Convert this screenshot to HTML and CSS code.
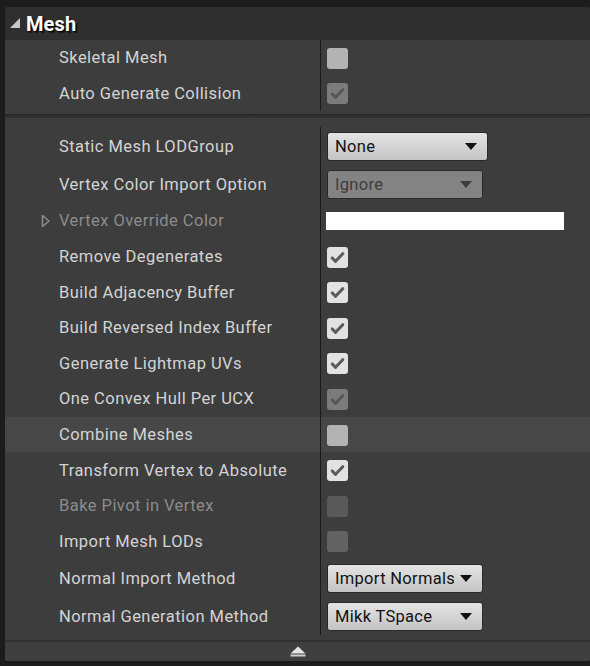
FILE: index.html
```html
<!DOCTYPE html>
<html>
<head>
<meta charset="utf-8">
<link rel="stylesheet" href="styles.css">
</head>
<body>
<div class="panel">
  <div class="header">
    <svg class="collapse" width="12" height="12" viewBox="0 0 12 12"><path d="M11 1 L11 11 L1 11 Z" fill="#c8c8c8"/></svg>
    <span class="title">Mesh</span>
  </div>
  <div class="group g1">
    <div class="row"><div class="label">Skeletal Mesh</div><div class="value"><span class="cb off"></span></div></div>
    <div class="row"><div class="label">Auto Generate Collision</div><div class="value"><span class="cb dis on"><svg viewBox="0 0 22 22"><path d="M5.5 11.5 L9 15 L16.5 7" /></svg></span></div></div>
  </div>
  <div class="sep"></div>
  <div class="group g2">
    <div class="row tall"><div class="label">Static Mesh LODGroup</div><div class="value"><span class="combo w160"><span>None</span><i class="arrow"></i></span></div></div>
    <div class="row tall"><div class="label">Vertex Color Import Option</div><div class="value"><span class="combo w155 disabled"><span>Ignore</span><i class="arrow"></i></span></div></div>
    <div class="row"><div class="label dim"><svg class="expander" width="10" height="14" viewBox="0 0 10 14"><path d="M1.5 1.5 L8 7 L1.5 12.5 Z" fill="none" stroke="#8a8a8a" stroke-width="1.6" stroke-linejoin="round"/></svg>Vertex Override Color</div><div class="value"><span class="swatch"></span></div></div>
    <div class="row"><div class="label">Remove Degenerates</div><div class="value"><span class="cb on"><svg viewBox="0 0 22 22"><path d="M5.5 11.5 L9 15 L16.5 7" /></svg></span></div></div>
    <div class="row"><div class="label">Build Adjacency Buffer</div><div class="value"><span class="cb on"><svg viewBox="0 0 22 22"><path d="M5.5 11.5 L9 15 L16.5 7" /></svg></span></div></div>
    <div class="row"><div class="label">Build Reversed Index Buffer</div><div class="value"><span class="cb on"><svg viewBox="0 0 22 22"><path d="M5.5 11.5 L9 15 L16.5 7" /></svg></span></div></div>
    <div class="row"><div class="label">Generate Lightmap UVs</div><div class="value"><span class="cb on"><svg viewBox="0 0 22 22"><path d="M5.5 11.5 L9 15 L16.5 7" /></svg></span></div></div>
    <div class="row"><div class="label">One Convex Hull Per UCX</div><div class="value"><span class="cb dis on"><svg viewBox="0 0 22 22"><path d="M5.5 11.5 L9 15 L16.5 7" /></svg></span></div></div>
    <div class="row hover"><div class="label">Combine Meshes</div><div class="value"><span class="cb off"></span></div></div>
    <div class="row"><div class="label">Transform Vertex to Absolute</div><div class="value"><span class="cb on"><svg viewBox="0 0 22 22"><path d="M5.5 11.5 L9 15 L16.5 7" /></svg></span></div></div>
    <div class="row"><div class="label dim">Bake Pivot in Vertex</div><div class="value"><span class="cb dis-off"></span></div></div>
    <div class="row"><div class="label">Import Mesh LODs</div><div class="value"><span class="cb dis-off2"></span></div></div>
    <div class="row tall"><div class="label">Normal Import Method</div><div class="value"><span class="combo w155"><span>Import Normals</span><i class="arrow"></i></span></div></div>
    <div class="row tall"><div class="label">Normal Generation Method</div><div class="value"><span class="combo w155"><span>Mikk TSpace</span><i class="arrow"></i></span></div></div>
  </div>
  <div class="footer">
    <svg width="16" height="11" viewBox="0 0 16 11"><path d="M8 0.5 L15.5 7.5 L0.5 7.5 Z" fill="#e6e6e6"/><rect x="0.5" y="8.5" width="15" height="2" fill="#cfcfcf"/></svg>
  </div>
</div>
</body>
</html>
```

FILE: styles.css
```css
html, body {
  margin: 0;
  padding: 0;
  background: #1c1c1c;
  font-family: Roboto, "Liberation Sans", sans-serif;
}
.panel {
  width: 585px;
  margin-left: 5px;
  padding-top: 7px;
}
.header {
  height: 33px;
  background: #2f2f2f;
  display: flex;
  align-items: center;
  border-radius: 2px 2px 0 0;
}
.collapse {
  margin-left: 4px;
  margin-top: -2px;
}
.title {
  margin-left: 5px;
  font-size: 20px;
  font-weight: bold;
  color: #ffffff;
  text-shadow: 1px 1px 0 #000, 2px 2px 1px rgba(0,0,0,0.6);
  letter-spacing: 0.1px;
}
.group {
  background: #3d3d3d;
}
.g1 {
  padding-bottom: 3px;
}
.sep {
  height: 4px;
  background: linear-gradient(#262626, #353535);
}
.g2 {
  padding-top: 9px;
  padding-bottom: 5px;
}
.row {
  display: grid;
  grid-template-columns: 315px 1fr;
  height: 35.6px;
}
.row.tall {
  height: 38px;
}
.row.hover {
  background: #474747;
}
.label {
  display: flex;
  align-items: center;
  padding-left: 54px;
  font-size: 16.5px;
  color: #d4d4d4;
  letter-spacing: 0.45px;
  position: relative;
}
.label.dim {
  color: #8c8c8c;
}
.expander {
  position: absolute;
  left: 36px;
  top: 11px;
}
.value {
  border-left: 1px solid #1a1a1a;
  display: flex;
  align-items: center;
  padding-left: 6px;
}
.cb {
  width: 21px;
  height: 21px;
  border-radius: 3px;
  box-sizing: border-box;
  display: inline-block;
  margin-top: 1px;
}
.cb svg {
  width: 21px;
  height: 21px;
  display: block;
}
.cb svg path {
  fill: none;
  stroke: #5c5c5c;
  stroke-width: 3.2;
  stroke-linecap: round;
  stroke-linejoin: round;
}
.cb.off {
  background: #b3b3b3;
}
.cb.on {
  background: #e2e2e2;
}
.cb.dis.on {
  background: #7b7b7b;
}
.cb.dis.on svg path {
  stroke: #565656;
}
.cb.dis-off {
  background: #595959;
}
.cb.dis-off2 {
  background: #626262;
}
.combo {
  height: 29px;
  box-sizing: border-box;
  border: 1px solid #2a2a2a;
  border-radius: 3px;
  background: linear-gradient(#e4e4e4, #c4c4c4);
  display: flex;
  align-items: center;
  justify-content: space-between;
  padding: 0 10px 0 7px;
  font-size: 16.5px;
  color: #111;
  letter-spacing: 0.3px;
}
.combo.w160 { width: 161px; }
.combo.w155 { width: 156px; }
.combo.disabled {
  background: #838383;
  color: #3c3c3c;
}
.arrow {
  width: 0;
  height: 0;
  border-left: 6px solid transparent;
  border-right: 6px solid transparent;
  border-top: 7px solid #111;
}
.combo.disabled .arrow {
  border-top-color: #3c3c3c;
}
.swatch {
  width: 238px;
  height: 18px;
  background: #ffffff;
  margin-left: -1px;
}
.footer {
  height: 19px;
  background: #3f3f3f;
  border-top: 2px solid #303030;
  display: flex;
  align-items: center;
  justify-content: center;
  border-radius: 0 0 2px 2px;
}
```
